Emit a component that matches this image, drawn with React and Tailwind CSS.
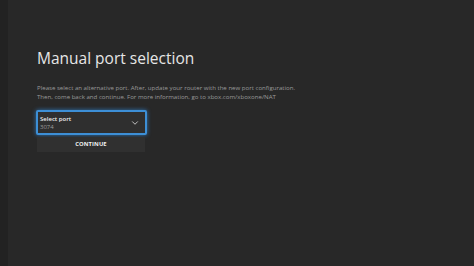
import { ChevronDown } from 'lucide-react';

export default function App() {
  return (
    <div className="w-[474px] h-[266px] flex bg-[#282828] overflow-hidden" style={{ fontFamily: '"Open Sans", "Noto Sans", sans-serif' }}>
      <div className="w-2 h-full bg-[#222222] shrink-0" />
      <div className="flex-1 pl-[29px] pt-[48px]">
        <h1 className="text-[15.5px] leading-[20px] text-[#e6e6e6] font-normal">Manual port selection</h1>

        <div className="mt-[15px] text-[6.1px] leading-[9px] text-[#9a9a9a]">
          <p>Please select an alternative port. After, update your router with the new port configuration.</p>
          <p>Then, come back and continue. For more information, go to xbox.com/xboxone/NAT</p>
        </div>

        {/* Select port */}
        <div className="mt-[9px] w-[111px] h-[25px] -ml-[1px] rounded-[2px] border-2 border-[#3d8fd6] bg-[#2f2f2f] shadow-[0_0_4px_#2f74b5] flex items-center justify-between pl-[2px] pr-[5px]">
          <div className="flex flex-col">
            <span className="text-[6px] leading-[8px] text-[#f0f0f0] font-semibold">Select port</span>
            <span className="text-[6px] leading-[8px] text-[#9d9d9d]">3074</span>
          </div>
          <ChevronDown className="w-[10px] h-[10px] text-[#e0e0e0]" strokeWidth={2} />
        </div>

        <div className="mt-[2px] w-[108px] h-[15px] bg-[#303030] flex items-center justify-center">
          <span className="text-[5.8px] font-bold text-[#f0f0f0] tracking-[0.1px]">CONTINUE</span>
        </div>
      </div>
    </div>
  );
}
